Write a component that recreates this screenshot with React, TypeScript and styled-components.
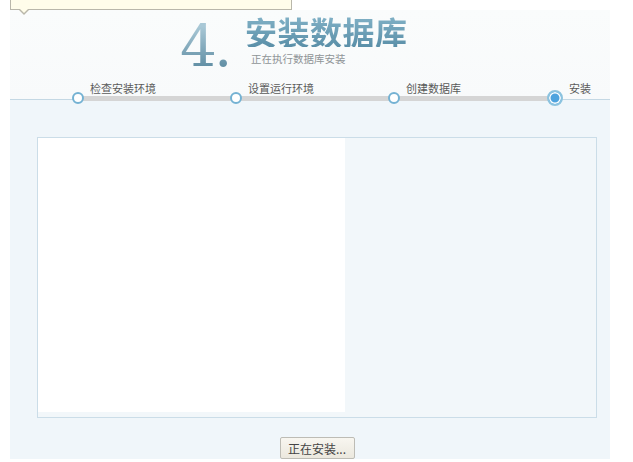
import React from 'react';
import styled, { createGlobalStyle } from 'styled-components';

const GlobalStyle = createGlobalStyle`
  html, body {
    margin: 0;
    padding: 0;
    background: #ffffff;
  }
  body {
    font-family: "Noto Sans CJK SC", "Noto Sans", sans-serif;
    color: #555;
  }
`;

const Page = styled.div`
  position: relative;
  width: 600px;
  margin: 0 0 0 10px;
  padding-top: 10px;
`;

const Tip = styled.div`
  position: absolute;
  left: 0;
  top: -22px;
  width: 280px;
  height: 30px;
  background: #fffdea;
  border: 1px solid #b9b7aa;
  z-index: 2;

  &::before,
  &::after {
    content: '';
    position: absolute;
    left: 7px;
    border-style: solid;
    border-color: transparent;
  }
  &::before {
    top: 30px;
    border-width: 6px 6px 0 6px;
    border-top-color: #b9b7aa;
  }
  &::after {
    top: 29px;
    left: 8px;
    border-width: 5px 5px 0 5px;
    border-top-color: #fffdea;
  }
`;

const Header = styled.div`
  height: 96px;
  background: linear-gradient(#fafcfc 0, #f8fafb 90px, #f0f6fa 90px);
  display: flex;
  flex-direction: column;
`;

const TitleRow = styled.div`
  height: 66px;
  display: flex;
  align-items: flex-start;
  padding-left: 170px;
`;

const BigNumber = styled.div`
  width: 56px;
  flex: none;
  font-family: "DejaVu Serif", "Liberation Serif", serif;
  font-weight: 400;
  font-size: 58px;
  line-height: 66px;
  margin-top: 3px;
  letter-spacing: -3px;
  white-space: nowrap;
  background: linear-gradient(#a9c8d6 20%, #5e8ca2 85%);
  -webkit-background-clip: text;
  background-clip: text;
  color: transparent;
`;

const TitleText = styled.div`
  display: flex;
  flex-direction: column;
  margin-left: 9px;
  padding-top: 5px;
`;

const Title = styled.h1`
  margin: 0;
  font-size: 32px;
  line-height: 32px;
  font-weight: 700;
  letter-spacing: 0.5px;
  background: linear-gradient(#82b2c7, #5a8fa8);
  -webkit-background-clip: text;
  background-clip: text;
  color: transparent;
`;

const Subtitle = styled.div`
  font-size: 10.5px;
  line-height: 13px;
  color: #8f9497;
  margin-left: 6px;
  margin-top: 5px;
`;

const StepsRow = styled.div`
  position: relative;
  height: 30px;
  display: flex;
  padding-left: 62px;

  &::before {
    content: '';
    position: absolute;
    left: 0;
    right: 0;
    top: 23px;
    height: 1px;
    background: #c4d8e4;
  }
  &::after {
    content: '';
    position: absolute;
    left: 68px;
    right: 55px;
    top: 20px;
    height: 5px;
    background: #d5d5d5;
  }
`;

const Step = styled.div<{ $w?: number }>`
  position: relative;
  z-index: 1;
  display: flex;
  align-items: flex-start;
  width: ${(p) => (p.$w ? `${p.$w}px` : 'auto')};
`;

const Dot = styled.span<{ $active?: boolean }>`
  box-sizing: border-box;
  display: block;
  flex: none;
  width: ${(p) => (p.$active ? 16 : 12)}px;
  height: ${(p) => (p.$active ? 16 : 12)}px;
  margin-top: ${(p) => (p.$active ? 14 : 16)}px;
  margin-left: ${(p) => (p.$active ? -2 : 0)}px;
  border-radius: 50%;
  border: 2px solid ${(p) => (p.$active ? '#8cc3df' : '#74b2d3')};
  background: ${(p) => (p.$active ? '#4ea3de' : '#ffffff')};
  box-shadow: ${(p) => (p.$active ? 'inset 0 0 0 1.5px #ffffff' : 'none')};
`;

const StepLabel = styled.span`
  font-size: 11px;
  line-height: 12px;
  color: #5a5a5a;
  margin-top: 6px;
  margin-left: 6px;
  white-space: nowrap;
`;

const Body = styled.div`
  height: 353px;
  background: #f0f6fa;
  display: flex;
  flex-direction: column;
  padding: 31px 0 0 27px;
  box-sizing: border-box;
`;

const LogBox = styled.div`
  width: 560px;
  height: 281px;
  box-sizing: border-box;
  border: 1px solid #cbdde8;
  background: #f2f7fa;
  display: flex;
`;

const LogPane = styled.div`
  width: 307px;
  height: 274px;
  background: #ffffff;
`;

const Footer = styled.div`
  display: flex;
  justify-content: center;
  padding: 19px 27px 0 0;
  margin-left: 14px;
`;

const Button = styled.button`
  height: 22px;
  width: 75px;
  padding: 0;
  font-family: "Noto Sans CJK SC", sans-serif;
  font-size: 12px;
  color: #444;
  background: linear-gradient(#f8f6f0, #ebe8de);
  border: 1px solid #bdbcb5;
  border-radius: 2px;
`;

const steps = [
  { label: '检查安装环境', w: 158 },
  { label: '设置运行环境', w: 158 },
  { label: '创建数据库', w: 161 },
  { label: '安装', active: true },
];

export default function App() {
  return (
    <Page>
      <GlobalStyle />
      <Tip />
      <Header>
        <TitleRow>
          <BigNumber>4.</BigNumber>
          <TitleText>
            <Title>安装数据库</Title>
            <Subtitle>正在执行数据库安装</Subtitle>
          </TitleText>
        </TitleRow>
        <StepsRow>
          {steps.map((s) => (
            <Step key={s.label} $w={s.w}>
              <Dot $active={s.active} />
              <StepLabel>{s.label}</StepLabel>
            </Step>
          ))}
        </StepsRow>
      </Header>
      <Body>
        <LogBox>
          <LogPane />
        </LogBox>
        <Footer>
          <Button type="button">正在安装...</Button>
        </Footer>
      </Body>
    </Page>
  );
}
